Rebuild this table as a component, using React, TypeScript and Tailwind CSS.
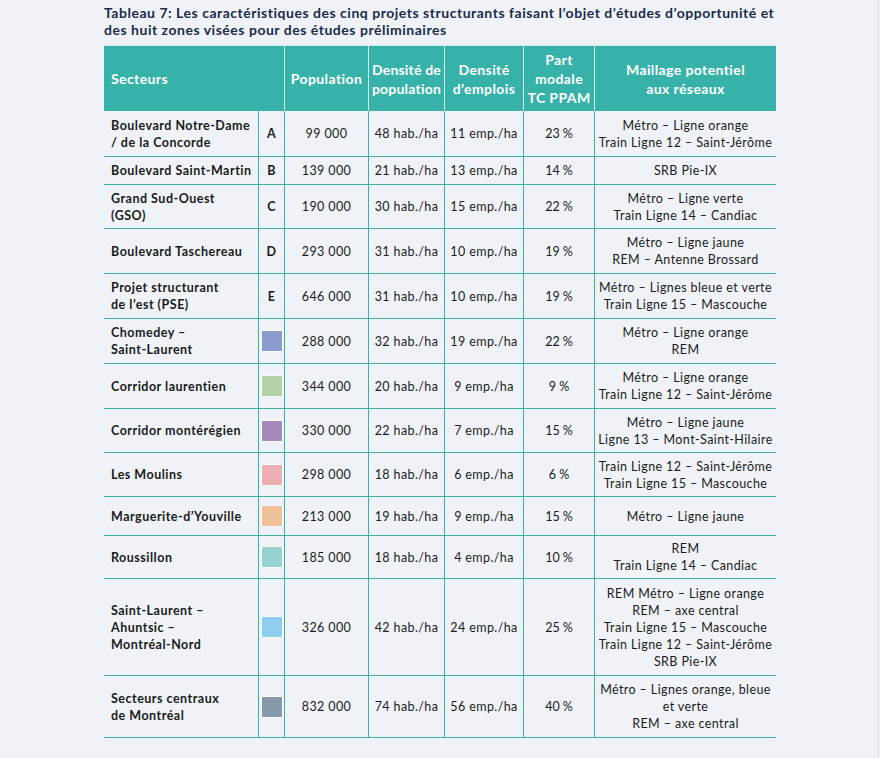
import React from "react";

interface ISector {
  name: string[];
  code?: string;
  swatch?: string;
  population: string;
  popDensity: string;
  jobDensity: string;
  modal: string;
  network: string[];
  height: string;
}

const sectors: ISector[] = [
  {
    name: ["Boulevard Notre-Dame", "/ de la Concorde"],
    code: "A",
    population: "99 000",
    popDensity: "48 hab./ha",
    jobDensity: "11 emp./ha",
    modal: "23\u202f%",
    network: ["Métro – Ligne orange", "Train Ligne 12 – Saint-Jérôme"],
    height: "h-[46px]",
  },
  {
    name: ["Boulevard Saint-Martin"],
    code: "B",
    population: "139 000",
    popDensity: "21 hab./ha",
    jobDensity: "13 emp./ha",
    modal: "14\u202f%",
    network: ["SRB Pie-IX"],
    height: "h-[28px]",
  },
  {
    name: ["Grand Sud-Ouest", "(GSO)"],
    code: "C",
    population: "190 000",
    popDensity: "30 hab./ha",
    jobDensity: "15 emp./ha",
    modal: "22\u202f%",
    network: ["Métro – Ligne verte", "Train Ligne 14 – Candiac"],
    height: "h-[44px]",
  },
  {
    name: ["Boulevard Taschereau"],
    code: "D",
    population: "293 000",
    popDensity: "31 hab./ha",
    jobDensity: "10 emp./ha",
    modal: "19\u202f%",
    network: ["Métro – Ligne jaune", "REM – Antenne Brossard"],
    height: "h-[45px]",
  },
  {
    name: ["Projet structurant", "de l’est (PSE)"],
    code: "E",
    population: "646 000",
    popDensity: "31 hab./ha",
    jobDensity: "10 emp./ha",
    modal: "19\u202f%",
    network: ["Métro – Lignes bleue et verte", "Train Ligne 15 – Mascouche"],
    height: "h-[45px]",
  },
  {
    name: ["Chomedey –", "Saint-Laurent"],
    swatch: "bg-[#8b9bcf]",
    population: "288 000",
    popDensity: "32 hab./ha",
    jobDensity: "19 emp./ha",
    modal: "22\u202f%",
    network: ["Métro – Ligne orange", "REM"],
    height: "h-[45px]",
  },
  {
    name: ["Corridor laurentien"],
    swatch: "bg-[#b6d1a6]",
    population: "344 000",
    popDensity: "20 hab./ha",
    jobDensity: "9 emp./ha",
    modal: "9\u202f%",
    network: ["Métro – Ligne orange", "Train Ligne 12 – Saint-Jérôme"],
    height: "h-[45px]",
  },
  {
    name: ["Corridor montérégien"],
    swatch: "bg-[#a988c0]",
    population: "330 000",
    popDensity: "22 hab./ha",
    jobDensity: "7 emp./ha",
    modal: "15\u202f%",
    network: ["Métro – Ligne jaune", "Ligne 13 – Mont-Saint-Hilaire"],
    height: "h-[44px]",
  },
  {
    name: ["Les Moulins"],
    swatch: "bg-[#eeafb4]",
    population: "298 000",
    popDensity: "18 hab./ha",
    jobDensity: "6 emp./ha",
    modal: "6\u202f%",
    network: ["Train Ligne 12 – Saint-Jérôme", "Train Ligne 15 – Mascouche"],
    height: "h-[44px]",
  },
  {
    name: ["Marguerite-d’Youville"],
    swatch: "bg-[#f0c297]",
    population: "213 000",
    popDensity: "19 hab./ha",
    jobDensity: "9 emp./ha",
    modal: "15\u202f%",
    network: ["Métro – Ligne jaune"],
    height: "h-[39px]",
  },
  {
    name: ["Roussillon"],
    swatch: "bg-[#97d2d0]",
    population: "185 000",
    popDensity: "18 hab./ha",
    jobDensity: "4 emp./ha",
    modal: "10\u202f%",
    network: ["REM", "Train Ligne 14 – Candiac"],
    height: "h-[43px]",
  },
  {
    name: ["Saint-Laurent –", "Ahuntsic –", "Montréal-Nord"],
    swatch: "bg-[#8fcdee]",
    population: "326 000",
    popDensity: "42 hab./ha",
    jobDensity: "24 emp./ha",
    modal: "25\u202f%",
    network: [
      "REM Métro – Ligne orange",
      "REM – axe central",
      "Train Ligne 15 – Mascouche",
      "Train Ligne 12 – Saint-Jérôme",
      "SRB Pie-IX",
    ],
    height: "h-[97px]",
  },
  {
    name: ["Secteurs centraux", "de Montréal"],
    swatch: "bg-[#8898ab]",
    population: "832 000",
    popDensity: "74 hab./ha",
    jobDensity: "56 emp./ha",
    modal: "40\u202f%",
    network: ["Métro – Lignes orange, bleue", "et verte", "REM – axe central"],
    height: "h-[62px]",
  },
];

const cols = "grid grid-cols-[155px_26px_84px_76px_79px_71px_181px]";

const Lines = ({ items }: { items: string[] }) => (
  <>
    {items.map((line) => (
      <span key={line} className="block whitespace-nowrap">
        {line}
      </span>
    ))}
  </>
);

export default function App() {
  return (
    <div className="flex min-h-screen font-['Lato','Noto_Sans',sans-serif]">
      <main className="w-[878px] bg-[#eff3f7] pl-[104px] pt-[4px]">
        <h1 className="text-[14px] leading-[17px] font-bold tracking-[0.52px] text-[#1c2b4a] whitespace-nowrap">
          Tableau 7: Les caractéristiques des cinq projets structurants faisant l’objet d’études d’opportunité et
          <br />
          des huit zones visées pour des études préliminaires
        </h1>

        <div className="mt-[7px] w-[672px] text-[12.5px] leading-[17px] tracking-[0.4px] text-[#1b1b1b]">
          <div
            className={`${cols} h-[66px] bg-[#36b2a9] border-t border-[#cfe9e6] text-white font-bold text-[14px] leading-[19px] tracking-[0.4px] text-center`}
          >
            <div className="col-span-2 flex items-center pl-[7px] border-r border-[#d3ece9]">Secteurs</div>
            <div className="flex items-center justify-center border-r border-[#d3ece9]">Population</div>
            <div className="flex items-center justify-center border-r border-[#d3ece9] whitespace-nowrap tracking-[0.2px]">
              <span>
                Densité de
                <br />
                population
              </span>
            </div>
            <div className="flex items-center justify-center border-r border-[#d3ece9]">
              <span>
                Densité
                <br />
                d’emplois
              </span>
            </div>
            <div className="flex items-center justify-center border-r border-[#d3ece9]">
              <span>
                Part
                <br />
                modale
                <br />
                TC PPAM
              </span>
            </div>
            <div className="flex items-center justify-center">
              <span>
                Maillage potentiel
                <br />
                aux réseaux
              </span>
            </div>
          </div>

          {sectors.map((s) => (
            <div key={s.name.join(" ")} className={`${cols} ${s.height} border-b border-[#3db0a8]`}>
              <div className="flex flex-col justify-center pl-[7px] font-bold tracking-[0.5px] border-r border-[#3db0a8]">
                <Lines items={s.name} />
              </div>
              <div className="flex items-center justify-center font-bold border-r border-[#3db0a8]">
                {s.code ? (
                  s.code
                ) : (
                  <span className={`block w-[20px] h-[20px] ${s.swatch} ring-1 ring-white/70`} />
                )}
              </div>
              <div className="flex items-center justify-center border-r border-[#3db0a8]">{s.population}</div>
              <div className="flex items-center justify-center border-r border-[#3db0a8]">{s.popDensity}</div>
              <div className="flex items-center justify-center border-r border-[#3db0a8]">{s.jobDensity}</div>
              <div className="flex items-center justify-center border-r border-[#3db0a8]">{s.modal}</div>
              <div className="flex flex-col justify-center text-center">
                <Lines items={s.network} />
              </div>
            </div>
          ))}
        </div>
      </main>
      <div className="w-px bg-[#d6dadf]" />
      <div className="flex-1 bg-[#f6f7f9]" />
    </div>
  );
}
